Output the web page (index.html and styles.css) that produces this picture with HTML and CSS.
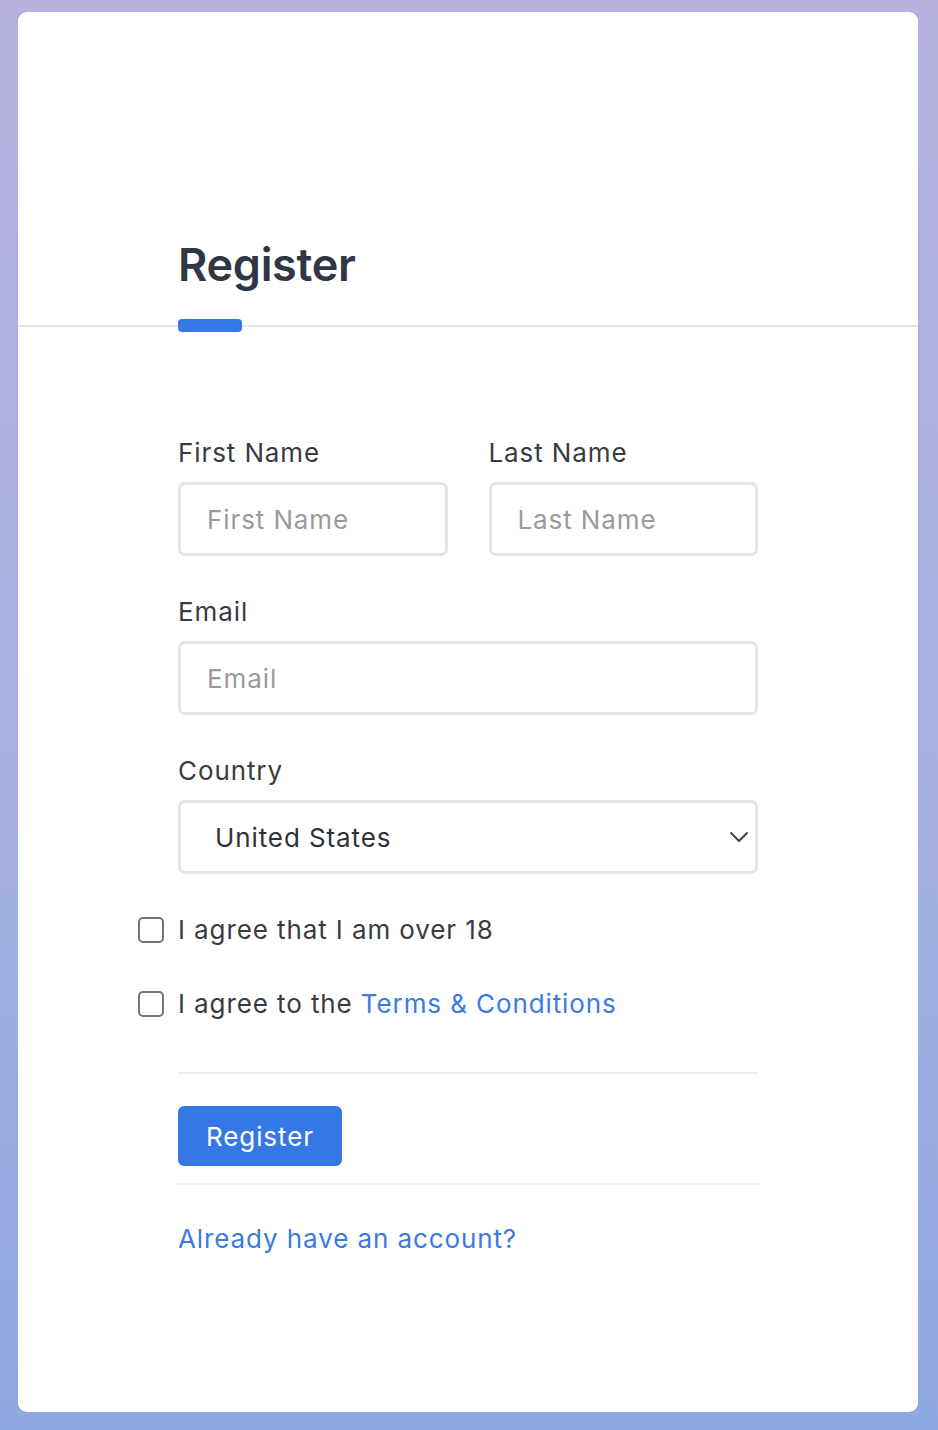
FILE: index.html
```html
<!DOCTYPE html>
<html lang="en">
<head>
<meta charset="utf-8">
<title>Register</title>
<link rel="stylesheet" href="styles.css">
</head>
<body>
<main class="card">
  <header class="card-header">
    <h1 class="title">Register</h1>
    <div class="title-bar"></div>
  </header>
  <form class="form">
    <div class="row-2">
      <div class="field">
        <label class="label" for="fn">First Name</label>
        <input class="input" id="fn" type="text" placeholder="First Name">
      </div>
      <div class="field">
        <label class="label" for="ln">Last Name</label>
        <input class="input" id="ln" type="text" placeholder="Last Name">
      </div>
    </div>
    <div class="field">
      <label class="label" for="em">Email</label>
      <input class="input" id="em" type="email" placeholder="Email">
    </div>
    <div class="field">
      <label class="label" for="co">Country</label>
      <div class="select-wrap">
        <select class="select" id="co">
          <option>United States</option>
          <option>Canada</option>
          <option>United Kingdom</option>
        </select>
        <svg class="chevron" width="20" height="12" viewBox="0 0 20 12"><path d="M2 2 L10 10 L18 2" fill="none" stroke="#444" stroke-width="2" stroke-linecap="round" stroke-linejoin="round"/></svg>
      </div>
    </div>
    <label class="check-row"><input class="check" type="checkbox"><span>I agree that I am over 18</span></label>
    <label class="check-row"><input class="check" type="checkbox"><span>I agree to the <a class="link" href="#">Terms &amp; Conditions</a></span></label>
    <div class="actions">
      <button class="btn" type="button">Register</button>
    </div>
    <a class="link login-link" href="#">Already have an account?</a>
  </form>
</main>
</body>
</html>
```
FILE: styles.css
```css
* { box-sizing: border-box; }
html, body { margin: 0; }
body {
  width: 938px;
  min-height: 1430px;
  padding: 12px 20px 18px 18px;
  background: linear-gradient(180deg, #b6b1de 0%, #a8b0e0 50%, #8ea9e0 100%);
  font-family: Inter, "Noto Sans", sans-serif;
}
.card {
  width: 900px;
  height: 1400px;
  background: #fff;
  border-radius: 9px;
}
.card-header {
  padding: 226px 0 0 160px;
  border-bottom: 2px solid #e4e6ea;
}
.title {
  margin: 0;
  font-size: 45px;
  line-height: 54px;
  font-weight: 600;
  color: #2f3747;
  letter-spacing: -0.3px;
}
.title-bar {
  width: 64px;
  height: 13px;
  margin-top: 27px;
  margin-bottom: -7px;
  background: #3578e5;
  border-radius: 4px;
}
.form {
  width: 580px;
  margin-left: 160px;
  padding-top: 110px;
  display: flex;
  flex-direction: column;
  letter-spacing: 0.9px;
}
.row-2 {
  display: grid;
  grid-template-columns: 1fr 1fr;
  gap: 41px;
}
.field {
  display: flex;
  flex-direction: column;
  margin-bottom: 40px;
}
.label {
  font-size: 26px;
  line-height: 32px;
  color: #383c42;
  margin-bottom: 13px;
}
.input, .select {
  width: 100%;
  height: 74px;
  border: 3px solid #e3e4e7;
  border-radius: 7px;
  background: #fff;
  font-family: inherit;
  font-size: 26px;
  letter-spacing: 0.9px;
  color: #333;
  padding: 0 26px;
  outline: none;
}
.input::placeholder { color: #9a9a9a; }
.select-wrap { position: relative; }
.select {
  appearance: none;
  -webkit-appearance: none;
  padding-left: 34px;
  color: #2f3338;
}
.chevron {
  position: absolute;
  right: 9px;
  top: 31px;
  pointer-events: none;
}
.check-row {
  display: flex;
  align-items: center;
  gap: 14px;
  margin-left: -40px;
  font-size: 26px;
  line-height: 32px;
  color: #383c42;
  margin-bottom: 42px;
}
.check {
  appearance: none;
  -webkit-appearance: none;
  width: 26px;
  height: 26px;
  margin: 0;
  border: 2px solid #757575;
  border-radius: 5px;
  background: #fff;
  flex: none;
}
.link {
  color: #3a7be2;
  text-decoration: none;
}
.actions {
  margin-top: 10px;
  border-top: 2px solid #f0f1f3;
  border-bottom: 2px solid #f0f1f3;
  padding: 32px 0 17px;
}
.btn {
  height: 60px;
  padding: 0 28px;
  border: none;
  border-radius: 6px;
  background: #3578e5;
  color: #fff;
  font-family: inherit;
  font-size: 26px;
  letter-spacing: 0.9px;
}
.login-link {
  font-size: 26px;
  line-height: 32px;
  margin-top: 38px;
  align-self: flex-start;
}
```
